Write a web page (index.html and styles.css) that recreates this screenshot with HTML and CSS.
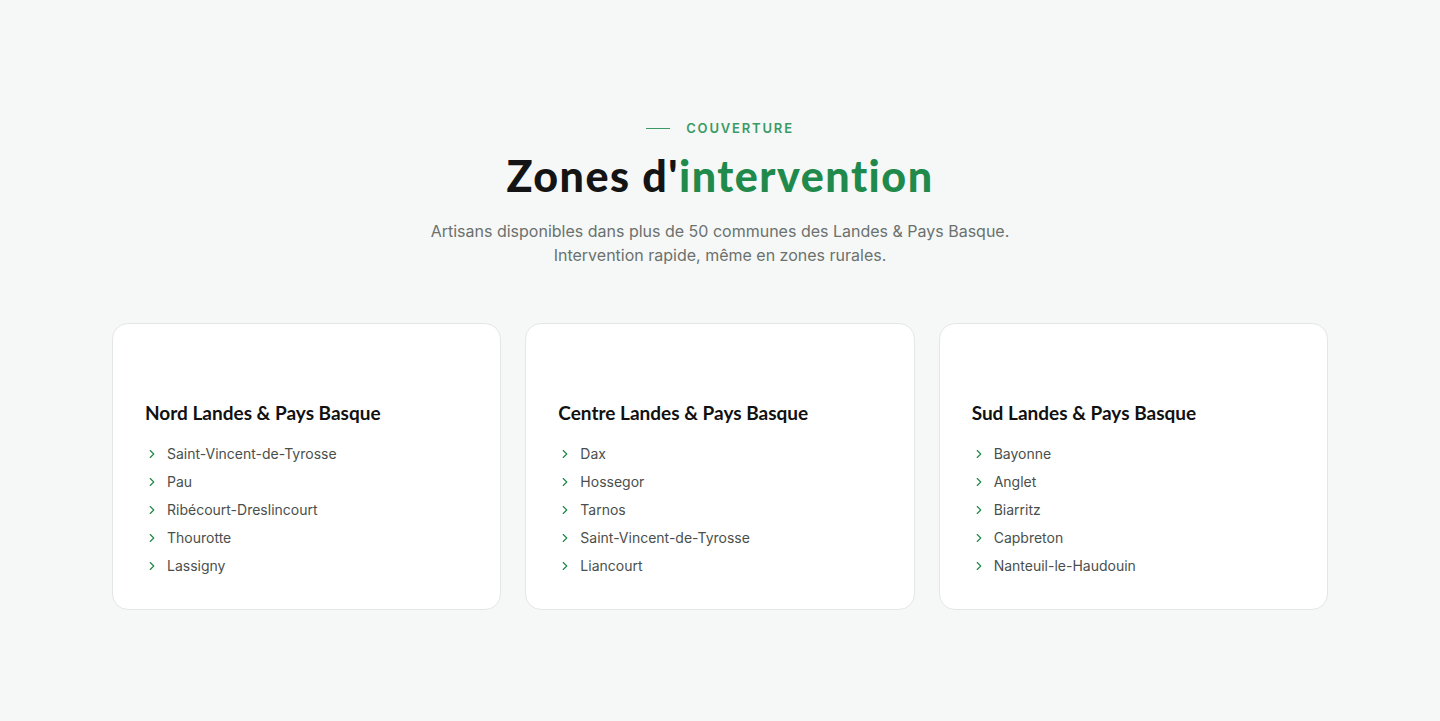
FILE: index.html
```html
<!DOCTYPE html>
<html lang="fr">
<head>
<meta charset="utf-8">
<title>Zones d'intervention</title>
<link rel="stylesheet" href="styles.css">
</head>
<body>
<section class="zones">
  <div class="container">
    <header class="zones-head">
      <div class="eyebrow"><span class="eyebrow-line"></span><span>COUVERTURE</span></div>
      <h2 class="title">Zones d'<span class="accent">intervention</span></h2>
      <p class="lead">Artisans disponibles dans plus de 50 communes des Landes &amp; Pays Basque.<br>Intervention rapide, même en zones rurales.</p>
    </header>
    <div class="cards">
      <article class="card">
        <div class="card-icon"></div>
        <h3 class="card-title">Nord Landes &amp; Pays Basque</h3>
        <ul class="towns">
          <li><svg viewBox="0 0 24 24"><path d="m9 18 6-6-6-6"/></svg>Saint-Vincent-de-Tyrosse</li>
          <li><svg viewBox="0 0 24 24"><path d="m9 18 6-6-6-6"/></svg>Pau</li>
          <li><svg viewBox="0 0 24 24"><path d="m9 18 6-6-6-6"/></svg>Ribécourt-Dreslincourt</li>
          <li><svg viewBox="0 0 24 24"><path d="m9 18 6-6-6-6"/></svg>Thourotte</li>
          <li><svg viewBox="0 0 24 24"><path d="m9 18 6-6-6-6"/></svg>Lassigny</li>
        </ul>
      </article>
      <article class="card">
        <div class="card-icon"></div>
        <h3 class="card-title">Centre Landes &amp; Pays Basque</h3>
        <ul class="towns">
          <li><svg viewBox="0 0 24 24"><path d="m9 18 6-6-6-6"/></svg>Dax</li>
          <li><svg viewBox="0 0 24 24"><path d="m9 18 6-6-6-6"/></svg>Hossegor</li>
          <li><svg viewBox="0 0 24 24"><path d="m9 18 6-6-6-6"/></svg>Tarnos</li>
          <li><svg viewBox="0 0 24 24"><path d="m9 18 6-6-6-6"/></svg>Saint-Vincent-de-Tyrosse</li>
          <li><svg viewBox="0 0 24 24"><path d="m9 18 6-6-6-6"/></svg>Liancourt</li>
        </ul>
      </article>
      <article class="card">
        <div class="card-icon"></div>
        <h3 class="card-title">Sud Landes &amp; Pays Basque</h3>
        <ul class="towns">
          <li><svg viewBox="0 0 24 24"><path d="m9 18 6-6-6-6"/></svg>Bayonne</li>
          <li><svg viewBox="0 0 24 24"><path d="m9 18 6-6-6-6"/></svg>Anglet</li>
          <li><svg viewBox="0 0 24 24"><path d="m9 18 6-6-6-6"/></svg>Biarritz</li>
          <li><svg viewBox="0 0 24 24"><path d="m9 18 6-6-6-6"/></svg>Capbreton</li>
          <li><svg viewBox="0 0 24 24"><path d="m9 18 6-6-6-6"/></svg>Nanteuil-le-Haudouin</li>
        </ul>
      </article>
    </div>
  </div>
</section>
</body>
</html>
```
FILE: styles.css
```css
* { box-sizing: border-box; }

html, body {
  margin: 0;
  padding: 0;
}

body {
  background: #f6f8f7;
  font-family: Inter, "Liberation Sans", sans-serif;
  color: #1a1a1a;
}

.zones {
  padding: 118px 0 112px;
}

.container {
  max-width: 1280px;
  margin: 0 auto;
  padding: 0 32px;
}

.zones-head {
  text-align: center;
}

.eyebrow {
  display: flex;
  align-items: center;
  justify-content: center;
  gap: 16px;
  font-size: 13px;
  font-weight: 600;
  letter-spacing: 0.14em;
  color: #3a9a66;
  line-height: 20px;
}

.eyebrow-line {
  width: 24px;
  height: 1px;
  background: #3a9a66;
}

.title {
  margin: 11px 0 0;
  font-family: Lato, "Noto Sans", sans-serif;
  font-weight: 900;
  font-size: 43px;
  line-height: 54px;
  color: #141414;
  letter-spacing: 1.5px;
}

.accent {
  color: #1f8a4c;
}

.lead {
  margin: 16px 0 0;
  font-size: 16px;
  line-height: 24px;
  color: #6b716e;
}

.cards {
  display: grid;
  grid-template-columns: repeat(3, 1fr);
  gap: 24px;
  margin-top: 56px;
}

.card {
  background: #fff;
  border: 1px solid #e3e7e5;
  border-radius: 16px;
  padding: 32px 32px 33px;
}

.card-icon {
  height: 43px;
}

.card-title {
  margin: 0;
  font-family: Lato, "Noto Sans", sans-serif;
  font-weight: 700;
  font-size: 19px;
  line-height: 28px;
  color: #111;
}

.towns {
  list-style: none;
  margin: 17px 0 0;
  padding: 0;
  display: flex;
  flex-direction: column;
  gap: 8px;
}

.towns li {
  display: flex;
  align-items: center;
  gap: 8px;
  font-size: 14px;
  line-height: 20px;
  color: #4a4f4c;
}

.towns svg {
  width: 14px;
  height: 14px;
  flex: none;
  fill: none;
  stroke: #1f8a4c;
  stroke-width: 2;
  stroke-linecap: round;
  stroke-linejoin: round;
}
```
